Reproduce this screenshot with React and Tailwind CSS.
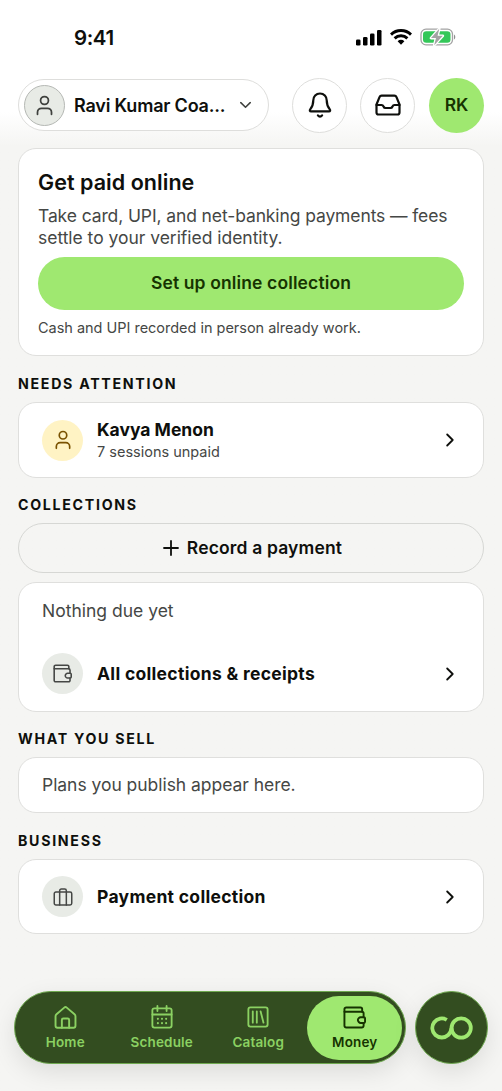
import { clsx } from 'clsx'

const iconProps = {
  fill: 'none',
  stroke: 'currentColor',
  strokeWidth: 1.8,
  strokeLinecap: 'round',
  strokeLinejoin: 'round',
}

const UserIcon = ({ className }) => (
  <svg viewBox="0 0 24 24" className={className} {...iconProps} strokeWidth={2}>
    <circle cx="12" cy="6.300" r="4.500" />
    <path d="M4 22v-2.200a4.600 4.600 0 0 1 4.600-4.600h6.800a4.600 4.600 0 0 1 4.600 4.600V22" />
  </svg>
)

const BellIcon = ({ className }) => (
  <svg viewBox="0 0 24 26" className={className} {...iconProps} strokeWidth={2.2}>
    <path d="M12 1.500C8 1.500 5.300 4.500 5.300 8.300c0 4.500-1.100 6.700-3.100 9.100-.8 1-.3 2 .8 2h18c1.100 0 1.600-1 .8-2-2-2.400-3.100-4.600-3.100-9.100 0-3.800-2.700-6.800-6.700-6.800z" />
    <path d="M9.900 23.400c1.100 1.500 3.100 1.500 4.200 0" />
  </svg>
)

const InboxIcon = ({ className }) => (
  <svg viewBox="0 0 26 22" className={className} {...iconProps} strokeWidth={2.2}>
    <path d="M1.500 10.500 4.500 3.200c.4-1 1.100-1.500 2.100-1.500h12.800c1 0 1.700.5 2.100 1.500l3 7.300v8a2 2 0 0 1-2 2h-19a2 2 0 0 1-2-2z" />
    <path d="M1.500 11h5c1.100 0 1.600.5 2 1.500s1 1.500 2 1.500h5c1 0 1.600-.5 2-1.500s.9-1.500 2-1.500h5" />
  </svg>
)

const WalletIcon = ({ className }) => (
  <svg viewBox="0 0 24 24" className={className} {...iconProps} strokeWidth={2}>
    <path d="M1.500 6V3.300a1.800 1.800 0 0 1 1.800-1.800h14.900A1.800 1.800 0 0 1 20 3.300V6" />
    <path d="M21.500 11.700V7.800A1.800 1.800 0 0 0 19.700 6H1.500v14.700a1.800 1.800 0 0 0 1.800 1.800h16.400a1.800 1.800 0 0 0 1.800-1.800v-3" />
    <path d="M21.800 11.700h-3.500c-1.200 0-2.800 1.700-2.800 3s1.600 3 2.800 3h3.500a1.200 1.200 0 0 0 1.200-1.200v-3.600a1.200 1.200 0 0 0-1.200-1.200z" />
  </svg>
)

const BriefcaseIcon = ({ className }) => (
  <svg viewBox="0 0 24 24" className={className} {...iconProps}>
    <rect x="1.500" y="6" width="21" height="15.500" rx="2" />
    <path d="M8 21.500V4.500a2 2 0 0 1 2-2h4a2 2 0 0 1 2 2v17" />
  </svg>
)

const HomeIcon = ({ className }) => (
  <svg viewBox="0 0 24 24" className={className} {...iconProps} strokeWidth={2}>
    <path d="M1.600 10.800c0-.9.300-1.500 1-2.100l8.100-7c.8-.7 1.800-.7 2.600 0l8.100 7c.7.600 1 1.200 1 2.100v9.900a2 2 0 0 1-2 2H3.600a2 2 0 0 1-2-2z" />
    <path d="M8.200 22.700v-8.200a1.500 1.500 0 0 1 1.500-1.500h4.600a1.500 1.500 0 0 1 1.500 1.500v8.200" />
  </svg>
)

const CalendarIcon = ({ className }) => (
  <svg viewBox="0 0 24 26" className={className} {...iconProps} strokeWidth={2}>
    <rect x="1.500" y="3.500" width="21" height="21" rx="2.200" />
    <path d="M1.500 10.300h21M7 1v5.500M17 1v5.500" />
    <path d="M7.500 15h.01M12 15h.01M16.500 15h.01M7.500 19.700h.01M12 19.700h.01M16.500 19.700h.01" strokeWidth={2.3} />
  </svg>
)

const CatalogIcon = ({ className }) => (
  <svg viewBox="0 0 24 24" className={className} {...iconProps} strokeWidth={2}>
    <rect x="1.500" y="1.500" width="21" height="21" rx="2.200" />
    <path d="M6.300 5.800v12.400M10.700 5.800v12.400M14.800 5.800l3.200 12.400" />
  </svg>
)

const ChevronIcon = ({ className }) => (
  <svg viewBox="0 0 8 14" className={className} {...iconProps}>
    <path d="M1.200 1.500 6.700 7l-5.500 5.500" />
  </svg>
)

const StatusBar = () => (
  <div className="flex h-[78px] items-start justify-between pt-[24px] pr-[46px] pl-[74px]">
    <span className="text-[20.5px] leading-[27px] font-semibold tracking-[-0.4px]">9:41</span>
    <div className="flex h-[26px] items-center">
      <svg viewBox="0 0 26 17" className="h-[17px] w-[26px]" fill="black">
        <rect x="0" y="10.500" width="4.500" height="6" rx="1.300" />
        <rect x="7" y="8" width="4.500" height="8.500" rx="1.300" />
        <rect x="14" y="4.500" width="4.500" height="12" rx="1.300" />
        <rect x="21" y="1" width="4.500" height="15.500" rx="1.300" />
      </svg>
      <svg viewBox="0 0 22 16" className="ml-[8px] h-[16px] w-[22px]" fill="none" stroke="black" strokeWidth="2.900">
        <path d="M1 5.600a14.300 14.300 0 0 1 20 0" />
        <path d="M4.600 9.400a9.100 9.100 0 0 1 12.800 0" />
        <path d="M7.600 12.200a4.900 4.900 0 0 1 6.800 0L11 15.700z" fill="black" stroke="none" />
      </svg>
      <svg viewBox="0 0 36 18" className="ml-[8px] h-[18px] w-[36px]">
        <rect x="1" y="1.200" width="31.500" height="15.600" rx="5" fill="none" stroke="#a3a3a3" strokeWidth="1.300" />
        <rect x="3" y="3.300" width="27.500" height="11.400" rx="3.300" fill="#34c759" />
        <path d="M34 6.500c1.700.8 1.700 4.200 0 5z" fill="#8e8e8e" />
        <path
          d="M19.300.8 11 10.100h5l-1.800 7.100 8.600-9.400h-5.200z"
          fill="#a3a3a3"
          stroke="white"
          strokeWidth="2.600"
          strokeLinejoin="round"
          paintOrder="stroke"
        />
      </svg>
    </div>
  </div>
)

const Header = () => (
  <div className="flex h-[54px] items-center">
    <button className="flex h-[52px] w-[251px] items-center rounded-full border border-[#dededc] bg-white pl-[5px]">
      <span className="flex size-[41px] items-center justify-center rounded-full border border-[#b5b8b4] bg-[#e8ebe6] text-[#3f413e]">
        <UserIcon className="size-[21px]" />
      </span>
      <span className="ml-[9px] w-[153px] text-left text-[18px] font-semibold tracking-[-0.2px] whitespace-nowrap">Ravi Kumar Coa...</span>
      <ChevronIcon className="ml-[15px] h-[12px] w-[7px] rotate-90 text-[#3f413e]" />
    </button>
    <button className="ml-[23px] flex size-[55px] items-center justify-center rounded-full border border-[#dededc] bg-white">
      <BellIcon className="h-[26px] w-[24px]" />
    </button>
    <button className="ml-[13px] flex size-[55px] items-center justify-center rounded-full border border-[#dededc] bg-white">
      <InboxIcon className="h-[22px] w-[26px]" />
    </button>
    <div className="ml-[14px] flex size-[55px] items-center justify-center rounded-full bg-[#9fe870] text-[17.5px] font-semibold text-[#163300]">RK</div>
  </div>
)

const Card = ({ className, children }) => (
  <div className={clsx('rounded-[18px] border border-[#dfdfdd] bg-white', className)}>{children}</div>
)

const SectionTitle = ({ children }) => (
  <h3 className="mb-[8px] text-[14.2px] leading-[20px] font-bold tracking-[1.7px] uppercase">{children}</h3>
)

const Row = ({ icon, iconClass, title, subtitle }) => (
  <div className="flex items-center pr-[29px] pl-[23px]">
    <span className={clsx('flex size-[41px] shrink-0 items-center justify-center rounded-full', iconClass)}>{icon}</span>
    <div className="ml-[14px] grow">
      <p className={clsx('text-[17.5px] leading-[23px] font-bold', subtitle ? 'tracking-[0px]' : 'tracking-[0.3px]')}>{title}</p>
      {subtitle && <p className="text-[14.5px] leading-[21px] text-[#454745]">{subtitle}</p>}
    </div>
    <ChevronIcon className="h-[14px] w-[8px]" />
  </div>
)

const tabs = [
  { label: 'Home', icon: HomeIcon, iconSize: 'size-[23px]' },
  { label: 'Schedule', icon: CalendarIcon, iconSize: 'h-[24px] w-[22px]' },
  { label: 'Catalog', icon: CatalogIcon, iconSize: 'size-[22px]' },
  { label: 'Money', icon: WalletIcon, iconSize: 'size-[23px]', active: true },
]

const TabBar = () => (
  <div className="flex items-center justify-between">
    <nav className="flex h-[73px] w-[392px] items-center rounded-full border border-[#6fa950] bg-[#334d20] pl-[2px] shadow-[0_8px_24px_rgba(0,0,0,0.10)]">
      {tabs.map(({ label, icon: Icon, iconSize, active }) => (
        <div key={label} className="flex w-[96.500px] shrink-0 justify-center">
          <a
            className={clsx(
              'flex h-[64px] w-[95px] flex-col items-center rounded-full pt-[9px]',
              active ? 'bg-[#9fe870] text-[#163300]' : 'text-[#8bd162]'
            )}
          >
            <span className="flex h-[25px] items-center">
              <Icon className={iconSize} />
            </span>
            <span className="mt-[2px] text-[13.5px] leading-[20px] font-semibold tracking-[0.15px]">{label}</span>
          </a>
        </div>
      ))}
    </nav>
    <button className="flex size-[73px] items-center justify-center rounded-full border border-[#6fa950] bg-[#334d20] shadow-[0_8px_24px_rgba(0,0,0,0.10)]">
      <svg viewBox="0 0 43 24" className="h-[24px] w-[43px]" fill="none" stroke="#9fe870" strokeWidth="3.800">
        <path d="M16.800 3.900A9.500 9.500 0 1 0 18.200 19C20 17.300 21.200 15 21.500 12" />
        <circle cx="31.200" cy="12" r="9.600" />
      </svg>
    </button>
  </div>
)

export default function App() {
  return (
    <div className="flex h-[1091px] w-[502px] flex-col overflow-hidden bg-linear-to-b from-white from-[112px] to-[#f5f5f3] to-[146px] font-['Inter',sans-serif] text-[#0e0f0c]">
      <StatusBar />
      <div className="px-[18px]">
        <Header />

        <Card className="mt-[16px] h-[208px] px-[19px] pt-[20px]">
          <h2 className="text-[21.5px] leading-[27px] font-semibold tracking-[0.05px]">Get paid online</h2>
          <p className="mt-[9px] text-[17.5px] leading-[22px] tracking-[-0.03px] whitespace-nowrap text-[#454745]">
            <span className="tracking-[-0.11px]">Take card, UPI, and net-banking payments — fees</span>
            <br />
            settle to your verified identity.
          </p>
          <button className="mt-[8px] h-[53px] w-full rounded-full bg-[#9fe870] text-[17.5px] font-semibold tracking-[0.13px] text-[#163300]">
            Set up online collection
          </button>
          <p className="mt-[8px] text-[14.5px] leading-[20px] tracking-[-0.02px] text-[#454745]">Cash and UPI recorded in person already work.</p>
        </Card>

        <div className="mt-[18px]">
          <SectionTitle>Needs attention</SectionTitle>
          <Card className="flex h-[76px] flex-col justify-center">
            <Row icon={<UserIcon className="size-[20px]" />} iconClass="bg-[#fff3c4] text-[#7a5200]" title="Kavya Menon" subtitle="7 sessions unpaid" />
          </Card>
        </div>

        <div className="mt-[17px]">
          <SectionTitle>Collections</SectionTitle>
          <button className="flex h-[50px] w-full items-center justify-center gap-[8px] rounded-full border border-[#d6d7d4] pl-[3px] text-[17.5px] font-semibold tracking-[0.15px]">
            <svg viewBox="0 0 16 16" className="size-[16px]" {...iconProps}>
              <path d="M8 1v14M1 8h14" />
            </svg>
            Record a payment
          </button>
          <Card className="mt-[9px] h-[130px] pt-[16px]">
            <p className="mb-[30px] pl-[23px] text-[17.5px] leading-[24px] text-[#454745]">Nothing due yet</p>
            <Row icon={<WalletIcon className="size-[19px]" />} iconClass="bg-[#e8ebe6] text-[#454745]" title="All collections &amp; receipts" />
          </Card>
        </div>

        <div className="mt-[17px]">
          <SectionTitle>What you sell</SectionTitle>
          <Card className="flex h-[56px] items-center pt-px pl-[23px]">
            <p className="text-[17.5px] tracking-[-0.04px] text-[#454745]">Plans you publish appear here.</p>
          </Card>
        </div>

        <div className="mt-[18px]">
          <SectionTitle>Business</SectionTitle>
          <Card className="flex h-[75px] flex-col justify-center">
            <Row icon={<BriefcaseIcon className="size-[20px]" />} iconClass="bg-[#e8ebe6] text-[#454745]" title="Payment collection" />
          </Card>
        </div>
      </div>

      <div className="mt-auto pr-[14px] pb-[27px] pl-[14px]">
        <TabBar />
      </div>
    </div>
  )
}
